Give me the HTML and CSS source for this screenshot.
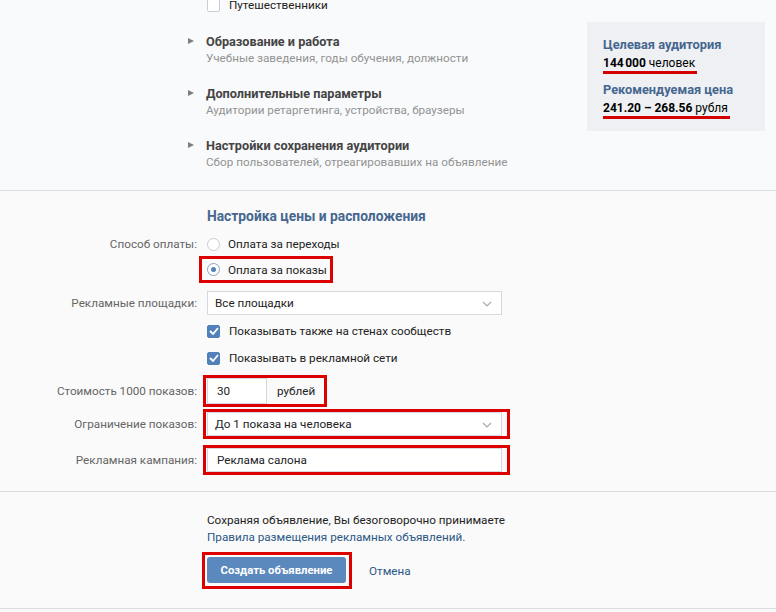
FILE: index.html
```html
<!DOCTYPE html>
<html>
  <head>
    <meta charset="utf-8" />
    <title>Создание объявления</title>
    <link rel="stylesheet" href="styles.css">
  </head>
  <body>
    <div class="top">
      <div class="targets">
        <div class="check-row cut">
          <span class="box"></span>
          <span>Путешественники</span>
        </div>
        <div class="expander">
          <span class="arrow"></span>
          <div>
            <div class="exp-title">Образование и работа</div>
            <div class="exp-sub">Учебные заведения, годы обучения, должности</div>
          </div>
        </div>
        <div class="expander">
          <span class="arrow"></span>
          <div>
            <div class="exp-title">Дополнительные параметры</div>
            <div class="exp-sub">Аудитории ретаргетинга, устройства, браузеры</div>
          </div>
        </div>
        <div class="expander">
          <span class="arrow"></span>
          <div>
            <div class="exp-title">Настройки сохранения аудитории</div>
            <div class="exp-sub">Сбор пользователей, отреагировавших на объявление</div>
          </div>
        </div>
      </div>
      <div class="summary">
        <div class="sum-title">Целевая аудитория</div>
        <div class="sum-value"><span class="mark"><b>144&#8239;000</b> человек</span></div>
        <div class="sum-title">Рекомендуемая цена</div>
        <div class="sum-value"><span class="mark"><b>241.20 – 268.56</b> рубля</span></div>
      </div>
    </div>

    <div class="section">
      <div class="section-title">Настройка цены и расположения</div>

      <div class="row pay1">
        <div class="label">Способ оплаты:</div>
        <div class="radio-row"><span class="radio"></span>Оплата за переходы</div>
      </div>
      <div class="row pay2">
        <div class="label"></div>
        <div class="hl hl-radio"><span class="radio on"></span>Оплата за показы</div>
      </div>
      <div class="row place">
        <div class="label">Рекламные площадки:</div>
        <div class="select">Все площадки<svg class="chev" width="10" height="6" viewBox="0 0 10 6"><polyline points="1,1 5,5 9,1" fill="none" stroke="#a4aab2" stroke-width="1.2"/></svg></div>
      </div>
      <div class="row chk1">
        <div class="label"></div>
        <div class="check-row"><span class="box on"><svg width="10" height="8" viewBox="0 0 10 8"><polyline points="1,4 4,7 9,1" fill="none" stroke="#fff" stroke-width="1.8"/></svg></span>Показывать также на стенах сообществ</div>
      </div>
      <div class="row chk2">
        <div class="label"></div>
        <div class="check-row"><span class="box on"><svg width="10" height="8" viewBox="0 0 10 8"><polyline points="1,4 4,7 9,1" fill="none" stroke="#fff" stroke-width="1.8"/></svg></span>Показывать в рекламной сети</div>
      </div>
      <div class="row cost">
        <div class="label">Стоимость 1000 показов:</div>
        <div class="hl hl-cost"><div class="input short">30</div><span class="unit">рублей</span></div>
      </div>
      <div class="row limit">
        <div class="label">Ограничение показов:</div>
        <div class="hl hl-wide"><div class="select">До 1 показа на человека<svg class="chev" width="10" height="6" viewBox="0 0 10 6"><polyline points="1,1 5,5 9,1" fill="none" stroke="#a4aab2" stroke-width="1.2"/></svg></div></div>
      </div>
      <div class="row camp">
        <div class="label">Рекламная кампания:</div>
        <div class="hl hl-wide"><div class="input wide">Реклама салона</div></div>
      </div>
    </div>

    <div class="footer">
      <div class="terms">
        Сохраняя объявление, Вы безоговорочно принимаете<br />
        <a href="#">Правила размещения рекламных объявлений.</a>
      </div>
      <div class="actions">
        <div class="hl hl-btn"><button class="btn">Создать объявление</button></div>
        <a class="cancel" href="#">Отмена</a>
      </div>
    </div>
  </body>
</html>
```

FILE: styles.css
```css
html {
  font-family: Roboto, "Open Sans", Arial, sans-serif;
  font-size: 11.7px;
  color: #222;
}

body {
  margin: 0;
  background-color: #fafafa;
  height: 612px;
  overflow: hidden;
}

/* top part: targeting options + summary */
.top {
  display: flex;
  justify-content: space-between;
  background-color: #f9fafb;
  border-bottom: 1px solid #dcdee2;
  height: 190px;
}

.targets {
  padding-left: 188px;
  margin-top: -4px;
}

.check-row {
  display: flex;
  align-items: center;
  height: 18px;
  color: #222;
}

.cut {
  padding-left: 19px;
  margin-bottom: 19px;
}

.box {
  width: 13px;
  height: 13px;
  border: 1px solid #c5cdd6;
  border-radius: 2px;
  background-color: white;
  margin-right: 9px;
  display: flex;
  align-items: center;
  justify-content: center;
  box-sizing: border-box;
  flex: none;
}

.box.on {
  background-color: #5181b8;
  border-color: #5181b8;
}

.expander {
  display: flex;
  margin-bottom: 18px;
}

.arrow {
  width: 0;
  height: 0;
  border-top: 3.5px solid transparent;
  border-bottom: 3.5px solid transparent;
  border-left: 6px solid #7b7e83;
  margin-top: 5px;
  margin-right: 12px;
}

.exp-title {
  font-weight: bold;
  font-size: 12.7px;
  color: #444;
  line-height: 17px;
}

.exp-sub {
  color: #939393;
  line-height: 17px;
}

.summary {
  width: 162px;
  height: 96px;
  background-color: #eef0f3;
  margin: 22px 11px 0 0;
  padding: 13px 0 0 16px;
}

.sum-title {
  color: #45678f;
  font-weight: bold;
  font-size: 12.8px;
  line-height: 19px;
}

.sum-value {
  line-height: 19px;
  font-size: 12px;
  color: #000;
  margin-bottom: 6px;
}

.mark {
  display: inline-block;
  border-bottom: 3px solid #d40000;
  line-height: 15px;
  padding-right: 2px;
}

/* price section */
.section {
  padding: 16px 0 16px;
  border-bottom: 1px solid #dcdee2;
}

.section-title {
  margin-left: 207px;
  font-weight: bold;
  color: #45678f;
  line-height: 18px;
  font-size: 13.8px;
}

.row {
  display: grid;
  grid-template-columns: 197px 1fr;
  column-gap: 10px;
  align-items: center;
}

.label {
  text-align: right;
  color: #656565;
}

.pay1 { margin-top: 10px; height: 18px; }
.pay2 { margin-top: 3px; }
.place { margin-top: 8px; }
.chk1 { margin-top: 7px; }
.chk2 { margin-top: 9px; }
.cost { margin-top: 8px; }
.limit { margin-top: 2px; }
.camp { margin-top: 6px; }

.radio-row {
  display: flex;
  align-items: center;
  color: #222;
}

.radio {
  width: 13px;
  height: 13px;
  border: 1px solid #c5cdd6;
  border-radius: 50%;
  background-color: white;
  box-sizing: border-box;
  margin-right: 8px;
  display: flex;
  align-items: center;
  justify-content: center;
}

.radio.on {
  border-color: #8aa3c1;
}

.radio.on::after {
  content: "";
  width: 5px;
  height: 5px;
  border-radius: 50%;
  background-color: #5181b8;
}

/* red marker boxes */
.hl {
  border: 3px solid #dd0000;
  display: flex;
  align-items: center;
  justify-self: start;
}

.hl-radio {
  margin-left: -8px;
  padding: 0 3px 0 5px;
  height: 21px;
  color: #222;
}

.hl-cost {
  margin-left: -4px;
  padding: 0 9px 0 1px;
  height: 26px;
}

.hl-wide {
  margin-left: -4px;
  padding: 0 5px 0 1px;
  height: 24px;
}

.hl-btn {
  margin-left: -5px;
  padding: 2px 3px 3px 2px;
}

.select {
  width: 295px;
  height: 24px;
  box-sizing: border-box;
  border: 1px solid #d3d9de;
  background-color: white;
  display: flex;
  align-items: center;
  justify-content: space-between;
  padding: 0 9px 0 7px;
  color: #222;
}

.chev {
  margin-top: 1px;
}

.input {
  height: 26px;
  box-sizing: border-box;
  border: 1px solid #d3d9de;
  background-color: white;
  display: flex;
  align-items: center;
  padding-left: 9px;
  color: #222;
}

.input.short {
  width: 60px;
}

.input.wide {
  width: 295px;
  height: 24px;
}

.unit {
  margin-left: 10px;
  color: #222;
}

/* footer */
.footer {
  padding: 20px 0 0 207px;
  height: 96px;
  border-bottom: 1px solid #dcdee2;
}

.terms {
  line-height: 17px;
  color: #222;
}

.terms a {
  color: #2a5885;
  text-decoration: none;
}

.actions {
  display: flex;
  align-items: center;
  margin-top: 6px;
}

.btn {
  width: 139px;
  height: 26px;
  border: none;
  border-radius: 3px;
  background-color: #5b88bd;
  color: white;
  font-family: inherit;
  font-size: 11.3px;
  font-weight: bold;
  padding: 0;
}

.cancel {
  margin-left: 17px;
  color: #2a5885;
  text-decoration: none;
}
```
